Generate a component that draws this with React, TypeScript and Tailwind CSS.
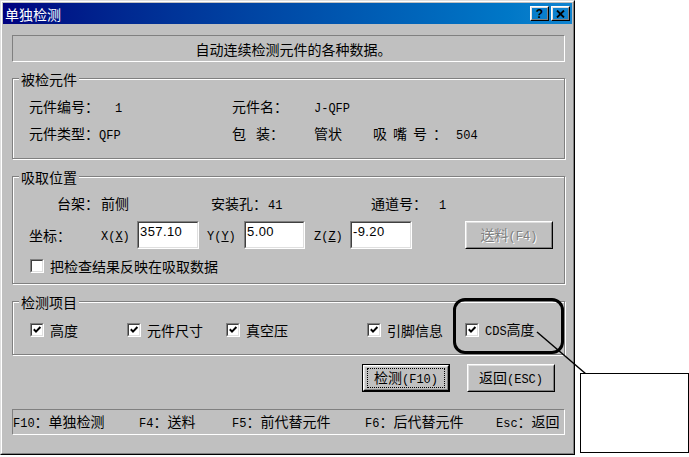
import React from "react";

const cjk = "font-['Noto_Sans_CJK_SC',sans-serif]";
const mono = "font-['Liberation_Mono',monospace] text-[12px]";

function Check({ checked }: { checked?: boolean }) {
  return (
    <span className="w-[14px] h-[14px] shrink-0 border border-t-[#808080] border-l-[#808080] border-r-white border-b-white">
      <span className="block w-full h-full border border-t-[#404040] border-l-[#404040] border-r-[#dfdfdf] border-b-[#dfdfdf] bg-white">
        {checked && (
          <svg width="10" height="10" viewBox="0 0 10 10" className="block">
            <path d="M1.8 4.3 L4 6.6 L8.4 2" stroke="black" strokeWidth="2" fill="none" />
          </svg>
        )}
      </span>
    </span>
  );
}

function Raised({ children, className = "" }: { children: React.ReactNode; className?: string }) {
  return (
    <div className={`border border-t-white border-l-white border-r-black border-b-black ${className}`}>
      <div className="w-full h-full border border-t-[#dfdfdf] border-l-[#dfdfdf] border-r-[#808080] border-b-[#808080] flex items-center justify-center">
        {children}
      </div>
    </div>
  );
}

function Group({ title, className = "", children }: { title: string; className?: string; children: React.ReactNode }) {
  return (
    <div className={`relative border border-[#808080] shadow-[inset_1px_1px_0_#fff,1px_1px_0_#fff] ${className}`}>
      <span className="absolute left-[6px] top-[-8px] px-[2px] bg-[#c0c0c0] leading-[16px]">{title}</span>
      {children}
    </div>
  );
}

function Input({ value, w }: { value: string; w: string }) {
  return (
    <div className={`${w} h-[28px] shrink-0 border border-t-[#808080] border-l-[#808080] border-r-white border-b-white`}>
      <div className="w-full h-full border border-t-[#404040] border-l-[#404040] border-r-[#dfdfdf] border-b-[#dfdfdf] bg-white pl-[1px] pt-[2px] font-['Liberation_Sans',sans-serif] text-[13px] leading-[14px] tracking-[0.4px]">
        {value}
      </div>
    </div>
  );
}

function Axis({ c }: { c: string }) {
  return (
    <span className={mono}>
      {c}(<span className="underline">{c}</span>)
    </span>
  );
}

function Item({ w, label, children }: { w?: string; label?: string; children?: React.ReactNode }) {
  return (
    <div className={`flex items-center ${w ?? ""} shrink-0`}>
      <Check checked />
      <span className="ml-[6px] leading-[16px]">{children ?? label}</span>
    </div>
  );
}

export default function App() {
  return (
    <div className={`relative w-[689px] h-[457px] bg-white overflow-hidden text-black text-[14px] ${cjk}`}>
      {/* dialog */}
      <div className="w-[575px] h-[455px] border border-t-[#dfdfdf] border-l-[#dfdfdf] border-r-black border-b-black bg-[#c0c0c0]">
        <div className="w-full h-full border border-t-white border-l-white border-r-[#808080] border-b-[#808080] p-px flex flex-col">
          {/* title bar */}
          <div className="h-[21px] shrink-0 bg-gradient-to-r from-[#000080] to-[#1084d0] flex items-center pl-[2px] pr-[2px]">
            <span className="text-white leading-[16px] text-[14px]">单独检测</span>
            <div className="ml-auto flex items-center gap-[2px]">
              <Raised className="w-[19px] h-[15px]">
                <span className="font-['Liberation_Sans',sans-serif] font-bold text-[12px] leading-[12px]">?</span>
              </Raised>
              <Raised className="w-[19px] h-[15px]">
                <svg width="9" height="8" viewBox="0 0 9 8">
                  <path d="M1 0.5 L8 7.5 M8 0.5 L1 7.5" stroke="black" strokeWidth="1.8" />
                </svg>
              </Raised>
            </div>
          </div>

          <div className="pl-[9px] pr-[7px] flex flex-col">
            {/* info box */}
            <div className="mt-[11px] h-[27px] border border-t-[#808080] border-l-[#808080] border-r-white border-b-white flex items-center justify-center">
              <span className="leading-[16px] pl-[10px]">自动连续检测元件的各种数据。</span>
            </div>

            {/* group 1 */}
            <Group title="被检元件" className="mt-[16px] h-[81px] pt-[19px]">
              <div className="flex items-baseline h-[16px] leading-[16px] pl-[16px]">
                <span className="w-[86px] shrink-0">元件编号：</span>
                <span className={`w-[117px] shrink-0 ${mono}`}>1</span>
                <span className="w-[82px] shrink-0">元件名：</span>
                <span className={mono}>J-QFP</span>
              </div>
              <div className="flex items-baseline h-[16px] leading-[16px] pl-[16px] mt-[11px]">
                <span className="w-[70px] shrink-0">元件类型：</span>
                <span className={`w-[133px] shrink-0 ${mono}`}>QFP</span>
                <span className="w-[82px] shrink-0">
                  包<span className="inline-block w-[10px]" />装：
                </span>
                <span className="w-[59px] shrink-0">管状</span>
                <span className="w-[83px] shrink-0 tracking-[6px]">吸嘴号：</span>
                <span className={mono}>504</span>
              </div>
            </Group>

            {/* group 2 */}
            <Group title="吸取位置" className="mt-[17px] h-[108px] pt-[18px]">
              <div className="flex items-baseline h-[16px] leading-[16px] pl-[44px]">
                <span className="w-[44px] shrink-0">台架：</span>
                <span className="w-[110px] shrink-0">前侧</span>
                <span className="w-[57px] shrink-0">安装孔：</span>
                <span className={`w-[103px] shrink-0 ${mono}`}>41</span>
                <span className="w-[68px] shrink-0">通道号：</span>
                <span className={mono}>1</span>
              </div>
              <div className="flex items-center h-[28px] mt-[10px] pl-[16px] leading-[16px]">
                <span className="w-[72px] shrink-0">坐标：</span>
                <span className="w-[36px] shrink-0"><Axis c="X" /></span>
                <Input value="357.10" w="w-[62px]" />
                <span className="w-[37px] shrink-0 ml-[8px]"><Axis c="Y" /></span>
                <Input value="5.00" w="w-[61px]" />
                <span className="w-[36px] shrink-0 ml-[9px]"><Axis c="Z" /></span>
                <Input value="-9.20" w="w-[62px]" />
                <Raised className="ml-[53px] w-[88px] h-[28px] shrink-0">
                  <span className="text-[#808080] [text-shadow:1px_1px_0_#fff] leading-[16px]">
                    送料<span className={mono}>(F4)</span>
                  </span>
                </Raised>
              </div>
              <div className="flex items-center h-[14px] mt-[10px] pl-[17px]">
                <Check />
                <span className="ml-[6px] leading-[16px]">把检查结果反映在吸取数据</span>
              </div>
            </Group>

            {/* group 3 */}
            <Group title="检测项目" className="mt-[17px] h-[54px] pt-[20px]">
              <div className="flex items-center h-[16px] pl-[17px]">
                <Item w="w-[97px]" label="高度" />
                <Item w="w-[99px]" label="元件尺寸" />
                <Item w="w-[141px]" label="真空压" />
                <Item w="w-[98px]" label="引脚信息" />
                <Item>
                  <span className={mono}>CDS</span>高度
                </Item>
              </div>
            </Group>

            {/* buttons */}
            <div className="mt-[9px] h-[28px] flex justify-end pr-[10px] gap-[17px]">
              <div className="w-[88px] h-[28px] border border-black">
                <Raised className="w-full h-full">
                  <span className="w-[78px] h-[20px] border border-dotted border-black leading-[16px] flex items-center justify-center">
                    <span>检测<span className={mono}>(F10)</span></span>
                  </span>
                </Raised>
              </div>
              <Raised className="w-[88px] h-[28px]">
                <span className="leading-[16px]">
                  返回<span className={mono}>(ESC)</span>
                </span>
              </Raised>
            </div>

            {/* status bar */}
            <div className="mt-[17px] h-[26px] border border-t-[#808080] border-l-[#808080] border-r-white border-b-white flex items-center leading-[16px]">
              <span className="w-[126px] shrink-0"><span className={mono}>F10</span>：单独检测</span>
              <span className="w-[93px] shrink-0"><span className={mono}>F4</span>：送料</span>
              <span className="w-[133px] shrink-0"><span className={mono}>F5</span>：前代替元件</span>
              <span className="w-[131px] shrink-0"><span className={mono}>F6</span>：后代替元件</span>
              <span className="shrink-0"><span className={mono}>Esc</span>：返回</span>
            </div>
          </div>
        </div>
      </div>

      {/* callout overlay */}
      <div className="absolute left-[453px] top-[298px] w-[111px] h-[56px] border-[3px] border-black rounded-[12px]" />
      <svg className="absolute left-0 top-0 pointer-events-none" width="689" height="457">
        <line x1="537" y1="332" x2="586" y2="374" stroke="black" strokeWidth="1.5" />
      </svg>
      <div className="absolute left-[580px] top-[373px] w-[109px] h-[80px] border border-black bg-white" />
    </div>
  );
}
